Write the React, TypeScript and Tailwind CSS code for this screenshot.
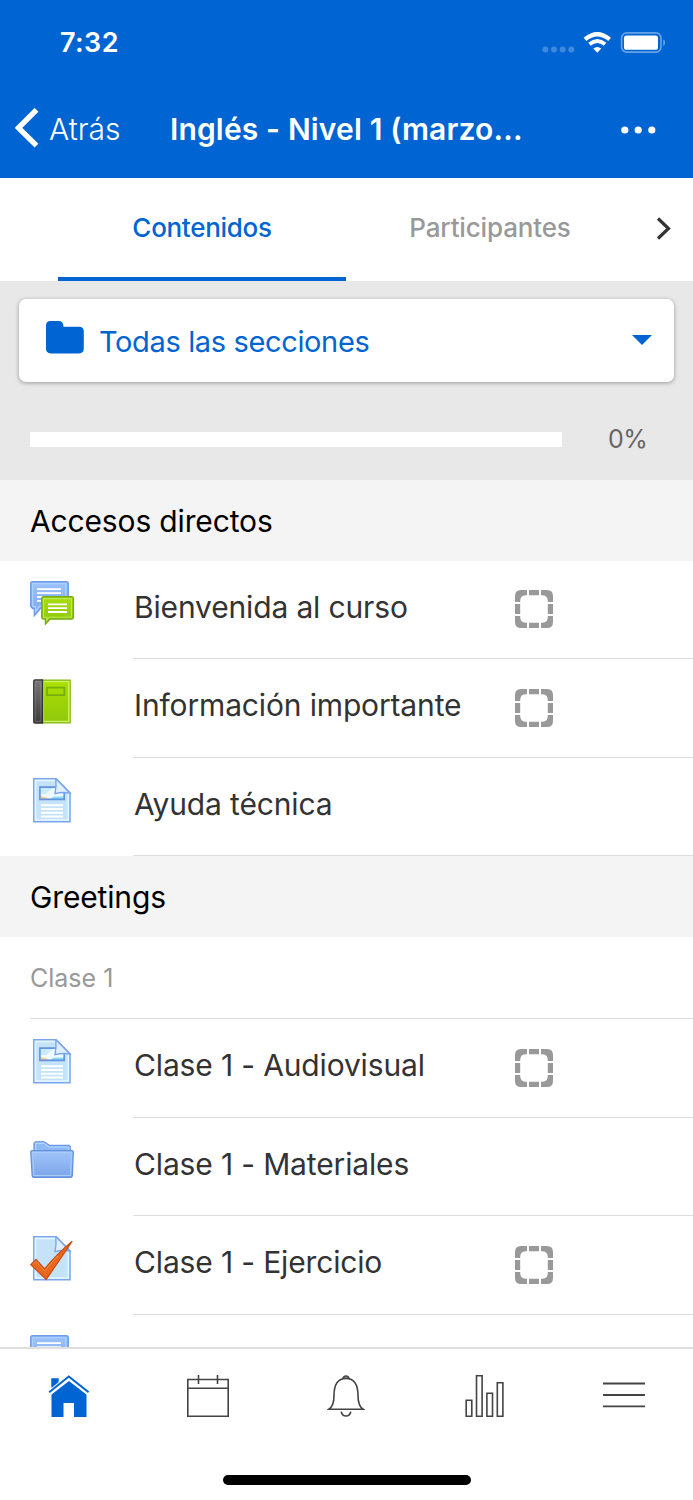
import type { ReactNode } from "react"

function ChatIcon() {
  return (
    <svg width="44" height="44" viewBox="0 0 44 44" fill="none">
      <defs>
        <linearGradient id="chatBlue" x1="0" y1="0" x2="0" y2="1">
          <stop offset="0" stopColor="#9cc3fb" />
          <stop offset="1" stopColor="#7ba5ef" />
        </linearGradient>
        <linearGradient id="chatGreen" x1="0" y1="0" x2="0" y2="1">
          <stop offset="0" stopColor="#a9dc12" />
          <stop offset="1" stopColor="#8fc50c" />
        </linearGradient>
      </defs>
      <path d="M2.400.8h33.800q2 0 2 2v22.400q0 2-2 2H10.500L4.400 34.500v-7H2.800l-2-2V2.400q0-1.600 1.600-1.600Z" fill="url(#chatBlue)" stroke="#6f9be9" strokeWidth="1.5" />
      <path d="M3.400 2.600h32.400v22.600H9.600L5.600 30.400v-4.800H3.200L2.600 24V3Z" stroke="#a9d0ff" strokeWidth="1.4" />
      <path d="M7 8.200h24M7 12.100h24M7 16h24M7 19.800h24" stroke="#fff" strokeWidth="1.8" />
      <path d="M13.600 15.800h28q1.800 0 1.800 1.800V36q0 2-2 2H20l-4.600 5v-5h-1.800q-1.800 0-1.800-1.800V17.600q0-1.800 1.800-1.800Z" fill="url(#chatGreen)" stroke="#76ad12" strokeWidth="1.4" />
      <path d="M14 17.600h27.400v18.600H19.200l-2.400 2.800v-2.800H13.600V18Z" stroke="#bdea52" strokeWidth="1.1" />
      <path d="M18 23.400h19M18 27.200h19M18 31h19" stroke="#fff" strokeWidth="1.8" />
    </svg>
  )
}

function BookIcon() {
  return (
    <svg width="44" height="45" viewBox="0 0 44 45" fill="none">
      <defs>
        <linearGradient id="bookCover" x1="0" y1="0" x2="0" y2="1">
          <stop offset="0" stopColor="#abe000" />
          <stop offset="1" stopColor="#90c80e" />
        </linearGradient>
        <linearGradient id="bookSpine" x1="0" y1="0" x2="0" y2="1">
          <stop offset="0" stopColor="#777" />
          <stop offset="1" stopColor="#3c3c3c" />
        </linearGradient>
      </defs>
      <path d="M12 1.2h28.2v42.6H12Z" fill="url(#bookCover)" stroke="#86bc14" strokeWidth="1.3" />
      <path d="M13.4 2.6h25.4v39.8H13.4Z" stroke="#caf269" strokeWidth="1.4" />
      <path d="M17 8.7h17.4v7.4H17Z" stroke="#77ad0c" strokeWidth="1.8" />
      <path d="M5 .9h7.6v43.2H5q-1.3 0-1.3-1.3V2.2Q3.7.9 5 .9Z" fill="url(#bookSpine)" stroke="#333" strokeWidth="1.2" />
      <path d="M5.200 2.600h5.600v39.800H5.200Z" stroke="#929292" strokeOpacity=".5" strokeWidth=".9" />
    </svg>
  )
}

function Sheet() {
  return (
    <>
      <path d="M3.800.8h22.400L40 14.800v29H3.800Z" fill="#c4e3f9" stroke="#7ba5f0" strokeWidth="1.5" />
      <path d="M5.500 2.500h20L38.300 15.600v26.500H5.500Z" stroke="#e6f6ff" strokeWidth="1.5" />
    </>
  )
}

function SheetFold() {
  return <path d="M25.800 1.200Q26.600 8.500 25 15.600 32 13.800 39.800 15L26.200 1Z" fill="#e0effc" stroke="#7ba5f0" strokeWidth="1.4" />
}

function PageIcon() {
  return (
    <svg width="44" height="45" viewBox="0 0 44 45" fill="none">
      <Sheet />
      <path d="M10 9.200h24.200v12.200H10Z" fill="#eefaff" />
      <path d="M10 10h13l-7 6h-6Z" fill="#c9ecfb" />
      <path d="M10 21v-3q6 .8 10 3Z" fill="#f3cd94" />
      <path d="M24 18.500h10V21H20Z" fill="#8fdcf2" />
      <path d="M9.900 9.100h24.300v12.300H9.900Z" stroke="#6292e2" strokeWidth="1.6" />
      <path d="M11 27.200h22M11 31h22M11 34.800h22M11 38.500h22" stroke="#fff" strokeWidth="1.9" />
      <SheetFold />
    </svg>
  )
}

function QuizIcon() {
  return (
    <svg width="44" height="45" viewBox="0 0 44 45" fill="none">
      <Sheet />
      <SheetFold />
      <path d="M.8 28.600 6 23.400l8.600 9.500Q27 18 42.200 5.200 31 22 16.200 43.400Z" fill="#e9681c" stroke="#c94f12" strokeWidth="1.3" />
      <path d="M3 28.500 6 25.400l8.600 9.400L28 19.600" stroke="#f28b4a" strokeWidth="1" />
    </svg>
  )
}

function FolderIcon() {
  return (
    <svg width="44" height="45" viewBox="0 0 44 45" fill="none">
      <defs>
        <linearGradient id="folderFront" x1="0" y1="0" x2="0" y2="1">
          <stop offset="0" stopColor="#a0c5fb" />
          <stop offset="1" stopColor="#7ca5e8" />
        </linearGradient>
      </defs>
      <path d="M4 18V5.200l1.400-1.400h8.800l5.200 3.600H39l1.200 1.200V18Z" fill="#8db9f6" stroke="#6a97e5" strokeWidth="1.3" />
      <path d="M5.600 12V5.400H14l5 3.600h19.600v3" stroke="#b3d6ff" strokeWidth="1.2" />
      <path d="M2 12.700h40q1.400 0 1.300 1.500l-1 23.500q-.2 1.700-1.800 1.700H4q-1.700 0-1.800-1.700L.8 14.200q-.1-1.500 1.200-1.500Z" fill="url(#folderFront)" stroke="#6391df" strokeWidth="1.3" />
      <path d="M2.600 14.500h39l-1.100 23H3.700Z" stroke="#a7ccfb" strokeWidth="1.1" />
    </svg>
  )
}

function CompletionIcon() {
  return (
    <svg width="38" height="38" viewBox="0 0 38 38" fill="#999">
      <path d="M6 0h6v5.200h-1.500Q5.200 5.500 5.200 11v1H0V6Q0 0 6 0Z" />
      <path d="M32 0h-6v5.200h1.500Q32.800 5.500 32.800 11v1H38V6q0-6-6-6Z" />
      <path d="M6 38h6v-5.200h-1.500Q5.200 32.500 5.200 27v-1H0v6q0 6 6 6Z" />
      <path d="M32 38h-6v-5.200h1.500Q32.800 32.500 32.800 27v-1H38v6q0 6-6 6Z" />
      <path d="M14 0h10v5.200H14ZM14 32.800h10V38H14ZM0 14h5.200v10H0ZM32.800 14H38v10h-5.200Z" />
    </svg>
  )
}

function SectionTitle({ children }: { children: ReactNode }) {
  return (
    <h2 className="h-[81px] shrink-0 bg-[#f4f4f4] pl-[30px] text-[30px] leading-[82px] tracking-[-0.15px] text-black">
      {children}
    </h2>
  )
}

type RowProps = {
  icon: ReactNode
  label?: string
  completion?: boolean
}

function Row({ icon, label, completion }: RowProps) {
  return (
    <li className="flex h-[98.5px] shrink-0 pl-[30px]">
      <div className="w-[103px] shrink-0 pt-5">{icon}</div>
      <div className="flex flex-1 items-center border-b border-[#dedede]">
        <span className="w-[382px] pb-1 pl-px text-[30px] tracking-[-0.15px] whitespace-nowrap">{label}</span>
        {completion && <CompletionIcon />}
      </div>
    </li>
  )
}

export default function CourseScreen() {
  return (
    <div className="flex h-[1500px] w-[693px] flex-col overflow-hidden bg-white font-['Inter',sans-serif] text-[#333]">
      <header className="h-[178px] shrink-0 bg-[#0064d2] text-white">
        {/* STATUS BAR */}
        <div className="flex h-[86px] items-center justify-between pr-[28px] pl-[60px]">
          <span className="text-[27px] font-semibold tracking-[0.4px]">7:32</span>
          <svg width="123" height="24" viewBox="542 31 123 24" fill="none">
            <g fill="#3d8ae0">
              <circle cx="545.4" cy="49.6" r="3" />
              <circle cx="554" cy="49.6" r="3" />
              <circle cx="562.7" cy="49.6" r="3" />
              <circle cx="571.3" cy="49.6" r="3" />
            </g>
            <path d="M585 39.400q12.300-10.400 24.600 0" stroke="#fff" strokeWidth="4.2" />
            <path d="M589.500 44.200q7.800-6.300 15.600 0" stroke="#fff" strokeWidth="4" />
            <path d="m597.300 52.800-4-4.200q4-3.200 8 0Z" fill="#fff" />
            <rect x="621.6" y="32.9" width="39.400" height="19.200" rx="5.2" stroke="#66a2e4" strokeWidth="1.7" />
            <rect x="624" y="35.600" width="34" height="14.200" rx="2.6" fill="#fff" />
            <path d="M663.200 39.500q2.200 1 2.200 3.200t-2.200 3.200Z" fill="#66a2e4" />
          </svg>
        </div>
        {/* NAV BAR */}
        <div className="flex h-[86px] items-center">
          <svg className="mb-[3px] ml-[15px]" width="24" height="40" viewBox="0 0 24 40" fill="none">
            <path d="M21.5 1.8 3.500 19.900l18 17.800" stroke="#fff" strokeWidth="5.4" />
          </svg>
          <span className="ml-[10px] w-[121px] text-[30px] font-light">Atrás</span>
          <h1 className="w-[451px] text-[30px] font-semibold tracking-[0.15px] whitespace-nowrap">Inglés - Nivel 1 (marzo...</h1>
          <svg className="mt-px" width="36" height="8" viewBox="0 0 36 8" fill="#fff">
            <circle cx="3.8" cy="4" r="3.6" />
            <circle cx="17.2" cy="4" r="3.6" />
            <circle cx="30.800" cy="4" r="3.6" />
          </svg>
        </div>
      </header>

      {/* TABS */}
      <nav className="flex h-[103px] shrink-0 pl-[58px] text-[26px] font-medium">
        <div className="w-[288px] border-b-4 border-[#0064d2] text-center leading-[100px] tracking-[-0.3px] text-[#0064d2]">Contenidos</div>
        <div className="w-[288px] text-center leading-[100px] tracking-[-0.15px] text-[#999]">Participantes</div>
        <svg className="mt-[39px] ml-[22px]" width="16" height="23" viewBox="0 0 16 23" fill="none">
          <path d="m2 1.500 10.500 10L2 21.500" stroke="#333" strokeWidth="3.2" />
        </svg>
      </nav>

      {/* SECTION PICKER */}
      <div className="h-[198.5px] shrink-0 bg-[#e8e8e8] px-[19px] pt-[18px]">
        <div className="flex h-[83px] items-center rounded-[7px] bg-white pr-[22px] pl-[27px] text-[#0064d2] shadow-[0_1px_4px_rgba(0,0,0,0.35)]">
          <svg className="mb-[6px]" width="38" height="33" viewBox="0 0 38 33" fill="#0064d2">
            <path d="M4.500 0h8q5 0 5 5.800H33q4.800 0 4.800 4.800v17q0 4.800-4.800 4.800H4.800Q0 32.400 0 27.600V4.500Q0 0 4.500 0Z" />
          </svg>
          <span className="mt-[2px] ml-[15px] flex-1 text-[29px] tracking-[-0.36px]">Todas las secciones</span>
          <svg className="mb-[2px]" width="20" height="10" viewBox="0 0 20 10" fill="#0064d2">
            <path d="M0 0h20L10 10Z" />
          </svg>
        </div>
        <div className="mt-[42px] flex h-[30px] items-center pl-[11px]">
          <div className="h-[15px] w-[532px] bg-white" />
          <span className="mt-[2px] ml-[46px] text-[25px] tracking-[-0.6px] text-[#666]">0%</span>
        </div>
      </div>

      {/* COURSE CONTENT */}
      <main className="flex min-h-0 flex-1 flex-col overflow-hidden">
        <SectionTitle>Accesos directos</SectionTitle>
        <ul className="shrink-0">
          <Row icon={<ChatIcon />} label="Bienvenida al curso" completion />
          <Row icon={<BookIcon />} label="Información importante" completion />
          <Row icon={<PageIcon />} label="Ayuda técnica" />
        </ul>
        <SectionTitle>Greetings</SectionTitle>
        <div className="ml-[30px] h-[82px] shrink-0 border-b border-[#dedede] text-[25px] leading-[83px] text-[#999]">Clase 1</div>
        <ul className="shrink-0">
          <Row icon={<PageIcon />} label="Clase 1 - Audiovisual" completion />
          <Row icon={<FolderIcon />} label="Clase 1 - Materiales" />
          <Row icon={<QuizIcon />} label="Clase 1 - Ejercicio" completion />
          <Row icon={<ChatIcon />} />
        </ul>
      </main>

      {/* BOTTOM BAR */}
      <footer className="h-[153px] shrink-0 border-t-2 border-[#dfdfdf] bg-white">
        <div className="grid h-[93px] grid-cols-5 items-center justify-items-center">
          <svg width="42" height="42" viewBox="0 0 42 42" fill="#0064d2">
            <path d="M3.500 3.500h7v6l-7 5.500Z" />
            <path d="M21 6 38.500 19.500V42H26V28H15.500v14h-12V19.500Z" />
            <path d="M1.200 17.200 20.800 1.500l19.800 15.700" fill="none" stroke="#fff" strokeWidth="6" />
            <path d="M3.500 3.500h7v3.800l-7 5.600Z" />
            <path d="M1.200 17.200 20.800 1.500l19.800 15.700" fill="none" stroke="#0064d2" strokeWidth="2" />
          </svg>
          <svg width="42" height="42" viewBox="0 0 42 42" fill="none" stroke="#444" strokeWidth="1.6">
            <path d="M.8 4.500h40.400v36.700H.8ZM.8 13.300h40.400M11.500 0v9M30.500 0v9" />
          </svg>
          <svg width="38" height="42" viewBox="0 0 38 42" fill="none" stroke="#444" strokeWidth="1.6">
            <path d="M1.800 34.300h34.400Q31 31 31 20.500 31 3.500 19 3.500T7 20.500Q7 31 1.800 34.300Z" />
            <path d="M16 3.300q.6-2.300 3-2.300t3 2.300ZM14.200 36.700q.8 4.300 4.800 4.300t4.800-4.300" />
          </svg>
          <svg width="40" height="42" viewBox="0 0 40 42" fill="none" stroke="#444" strokeWidth="1.6">
            <path d="M1.200 25.200h5.600v16H1.200ZM11.500.8h5.600v40.400h-5.600ZM21.900 18.200h5.600v23h-5.600ZM32.300 7.800h5.600v33.400h-5.600Z" />
          </svg>
          <svg className="mb-px" width="42" height="28" viewBox="0 0 42 28" stroke="#444" strokeWidth="1.8">
            <path d="M0 2.500h42M0 14h42M0 25.300h42" />
          </svg>
        </div>
        <div className="mx-auto mt-[33px] h-[10px] w-[248px] rounded-full bg-black" />
      </footer>
    </div>
  )
}
